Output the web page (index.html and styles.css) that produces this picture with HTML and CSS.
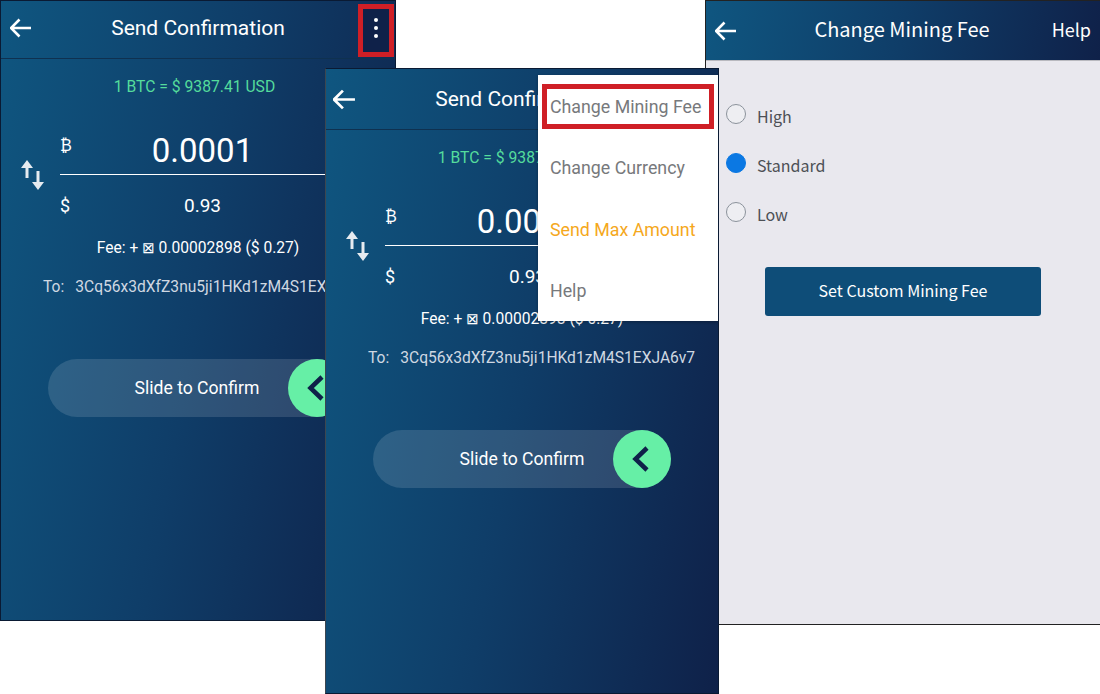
FILE: index.html
```html
<!DOCTYPE html>
<html lang="en">
<head>
<meta charset="UTF-8">
<meta name="viewport" content="width=device-width, initial-scale=1.0">
<title>Change Mining Fee</title>
<link rel="stylesheet" href="styles.css">
</head>
<body>
<div class="screen screen-send screen-first">
  <div class="topbar">
    <svg class="back" viewBox="0 0 22 20"><path d="M21 10H1M9.500 1.500 1 10l8.500 8.500"/></svg>
    <div class="title">Send Confirmation</div>
    <div class="more marked"><span></span><span></span><span></span></div>
  </div>
  <div class="rate">1 BTC = $ 9387.41 USD</div>
  <div class="amount">
    <svg class="swap" viewBox="0 0 23 30"><path class="shaft" d="M6 6v12M17 11v12"/><path class="head" d="M6 0l6 8H0zM17 30l-6-8h12z"/></svg>
    <div class="values">
      <div class="row row-btc"><span class="unit">₿</span><span class="big">0.0001</span></div>
      <div class="row row-usd"><span class="unit unit-usd">$</span><span class="small">0.93</span></div>
    </div>
  </div>
  <div class="fee">Fee: + <span class="tofu">⊠</span> 0.00002898 ($ 0.27)</div>
  <div class="to"><span>To:</span><span>3Cq56x3dXfZ3nu5ji1HKd1zM4S1EXJA6v7</span></div>
  <div class="slider">
    <span class="slider-text">Slide to Confirm</span>
    <div class="knob"><svg viewBox="0 0 17 26"><path d="M15 2 3.500 13 15 24"/></svg></div>
  </div>
</div>

<div class="screen screen-fee">
  <div class="topbar topbar-fee">
    <svg class="back" viewBox="0 0 22 20"><path d="M21 10H1M9.500 1.500 1 10l8.500 8.500"/></svg>
    <div class="title">Change Mining Fee</div>
    <div class="help">Help</div>
  </div>
  <div class="options">
    <div class="option"><span class="radio"></span><span class="option-label">High</span></div>
    <div class="option"><span class="radio radio-on"></span><span class="option-label">Standard</span></div>
    <div class="option"><span class="radio"></span><span class="option-label">Low</span></div>
  </div>
  <button class="custom" type="button">Set Custom Mining Fee</button>
</div>

<div class="screen screen-send screen-second">
  <div class="topbar">
    <svg class="back" viewBox="0 0 22 20"><path d="M21 10H1M9.500 1.500 1 10l8.500 8.500"/></svg>
    <div class="title">Send Confirmation</div>
    <div class="more"></div>
  </div>
  <div class="rate">1 BTC = $ 9387.41 USD</div>
  <div class="amount">
    <svg class="swap" viewBox="0 0 23 30"><path class="shaft" d="M6 6v12M17 11v12"/><path class="head" d="M6 0l6 8H0zM17 30l-6-8h12z"/></svg>
    <div class="values">
      <div class="row row-btc"><span class="unit">₿</span><span class="big">0.0001</span></div>
      <div class="row row-usd"><span class="unit unit-usd">$</span><span class="small">0.93</span></div>
    </div>
  </div>
  <div class="fee">Fee: + <span class="tofu">⊠</span> 0.00002898 ($ 0.27)</div>
  <div class="to"><span>To:</span><span>3Cq56x3dXfZ3nu5ji1HKd1zM4S1EXJA6v7</span></div>
  <div class="slider">
    <span class="slider-text">Slide to Confirm</span>
    <div class="knob"><svg viewBox="0 0 17 26"><path d="M15 2 3.500 13 15 24"/></svg></div>
  </div>
  <div class="menu">
    <div class="menu-item menu-marked">Change Mining Fee</div>
    <div class="menu-item">Change Currency</div>
    <div class="menu-item menu-max">Send Max Amount</div>
    <div class="menu-item">Help</div>
  </div>
</div>
</body>
</html>
```

FILE: styles.css
```css
html, body {
  margin: 0;
  padding: 0;
}
body {
  width: 1100px;
  height: 694px;
  position: relative;
  overflow: hidden;
  background-color: #fff;
  font-family: Roboto, "Liberation Sans", sans-serif;
}
.screen {
  position: absolute;
  box-sizing: border-box;
  overflow: hidden;
  color: #fff;
}
.screen-send {
  border: 1px solid #0a1a33;
  background: linear-gradient(100deg, #0f5680 0%, #0f3d68 50%, #0f2149 100%);
}
.screen-first {
  left: 0;
  top: 0;
  width: 396px;
  height: 621px;
}
.screen-second {
  left: 325px;
  top: 68px;
  width: 394px;
  height: 626px;
  border-left-color: #3c4650;
}
.screen-fee {
  left: 705px;
  top: 0;
  width: 395px;
  height: 625px;
  border: 1px solid #222;
  border-right: none;
  background-color: #e9e8ee;
  font-family: "Noto Sans CJK SC", "Noto Sans", sans-serif;
}

/* top bars */
.topbar {
  display: grid;
  grid-template-columns: 1fr auto 1fr;
  align-items: center;
  height: 54px;
  padding: 0 1px 3px;
  border-bottom: 1px solid #0f3150;
}
.screen-second .topbar {
  height: 60px;
  padding-bottom: 0;
}
.topbar-fee {
  height: 59px;
  padding: 0 9px 0 7px;
  border-bottom: 1px solid #b9b9bf;
  background: linear-gradient(100deg, #0f5680 0%, #0f3d68 50%, #0f2149 100%);
}
.title {
  font-size: 21px;
}
.topbar-fee .title {
  font-size: 20px;
  margin-bottom: 4px;
}
.back {
  width: 22px;
  height: 20px;
  margin-left: 8px;
  fill: none;
  stroke: #fff;
  stroke-width: 2.6;
}
.screen-second .back {
  width: 23px;
  height: 21px;
  margin-left: 6px;
}
.topbar-fee .back {
  margin-left: 2px;
}
.more {
  justify-self: end;
  box-sizing: border-box;
  width: 36px;
  height: 53px;
  display: flex;
  flex-direction: column;
  align-items: center;
  justify-content: center;
  gap: 4px;
}
.more span {
  width: 4px;
  height: 4px;
  border-radius: 50%;
  background-color: #fff;
}
.marked {
  align-self: end;
  margin-bottom: -2px;
  padding-bottom: 5px;
  border: 5px solid #cf1f26;
  background-color: #0f2149;
}
.help {
  justify-self: end;
  font-size: 18px;
  margin-bottom: 4px;
}

/* amount area */
.rate {
  margin-top: 18px;
  padding-right: 7px;
  text-align: center;
  font-size: 15.7px;
  line-height: 20px;
  color: #55dc9c;
}
.amount {
  display: flex;
  align-items: center;
  margin-top: 29px;
  padding-left: 20px;
}
.swap {
  width: 23px;
  height: 30px;
  margin: -12px 16px 0 0;
  flex: none;
}
.shaft {
  fill: none;
  stroke: #e6ebf0;
  stroke-width: 3;
}
.head {
  fill: #e6ebf0;
}
.values {
  width: 285px;
}
.row {
  display: flex;
  position: relative;
  justify-content: center;
}
.row-btc {
  height: 48px;
  border-bottom: 1px solid #fff;
  align-items: center;
}
.row-usd {
  height: 61px;
  align-items: center;
}
.unit {
  position: absolute;
  left: 0;
  top: 10px;
  font-size: 16px;
}
.unit-usd {
  top: 20px;
  font-size: 18px;
}
.big {
  font-size: 33px;
}
.small {
  font-size: 19px;
}
.fee {
  margin-top: 2px;
  text-align: center;
  font-size: 15.6px;
  line-height: 20px;
}
.tofu {
  font-family: "DejaVu Sans", sans-serif;
  font-size: 15px;
}
.to {
  display: flex;
  gap: 11px;
  margin-top: 19px;
  padding-left: 42px;
  white-space: nowrap;
  font-size: 15.6px;
  line-height: 20px;
  color: #cfd8e2;
}
.slider {
  position: relative;
  display: flex;
  align-items: center;
  justify-content: center;
  height: 58px;
  width: 298px;
  margin: 62px 0 0 47px;
  border-radius: 29px;
  background-color: rgba(255, 255, 255, 0.13);
}
.slider-text {
  font-size: 17.6px;
}
.knob {
  position: absolute;
  right: 0;
  top: 0;
  width: 58px;
  height: 58px;
  border-radius: 50%;
  background-color: #66efa6;
  display: flex;
  align-items: center;
  justify-content: center;
}
.knob svg {
  width: 17px;
  height: 26px;
  margin-right: 3px;
  fill: none;
  stroke: #0f2149;
  stroke-width: 4.5;
}

/* overflow menu */
.menu {
  position: absolute;
  left: 212px;
  top: 6px;
  width: 180px;
  height: 246px;
  display: flex;
  flex-direction: column;
  background-color: #fff;
  box-shadow: 0 1px 3px rgba(0, 0, 0, 0.3);
}
.menu-item {
  position: relative;
  flex: 1;
  display: flex;
  align-items: center;
  padding-left: 12px;
  font-size: 17.8px;
  color: #77797c;
}
.menu-marked {
  padding-top: 1px;
}
.menu-marked::after {
  content: "";
  position: absolute;
  left: 4px;
  top: 9px;
  width: 172px;
  height: 45px;
  box-sizing: border-box;
  border: 5px solid #cf1f26;
}
.menu-max {
  color: #f5a81c;
}

/* mining fee options */
.options {
  display: flex;
  flex-direction: column;
  gap: 29px;
  margin-top: 43px;
  padding-left: 20px;
}
.option {
  display: flex;
  align-items: center;
  gap: 11px;
  height: 20px;
  font-size: 16px;
  color: #4d5055;
}
.option-label {
  padding-top: 4px;
}
.radio {
  box-sizing: border-box;
  width: 20px;
  height: 20px;
  border: 1px solid #8b929b;
  border-radius: 50%;
  background-color: #eeeef2;
}
.radio-on {
  border-color: #0b78e3;
  background-color: #0b78e3;
}
.custom {
  display: block;
  width: 276px;
  height: 49px;
  margin: 45px 0 0 59px;
  padding-bottom: 4px;
  border: none;
  border-radius: 3px;
  background-color: #0e4d78;
  color: #fff;
  font-family: "Noto Sans CJK SC", "Noto Sans", sans-serif;
  font-size: 16px;
}
```
